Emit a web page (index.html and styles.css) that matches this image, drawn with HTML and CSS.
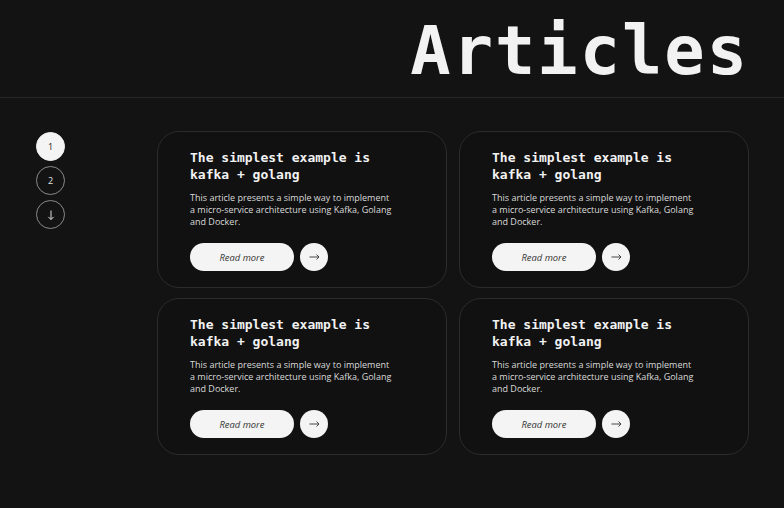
FILE: index.html
```html
<!DOCTYPE html>
<html lang="en">
<head>
<meta charset="utf-8">
<title>Articles</title>
<link rel="stylesheet" href="styles.css">
</head>
<body>
<header class="top">
  <h1 class="title">Articles</h1>
</header>
<main class="main">
  <nav class="pager">
    <span class="dot active">1</span>
    <span class="dot">2</span>
    <span class="dot"><svg width="10" height="12" viewBox="0 0 10 12"><path d="M5 1.5v9M2.4 7.9L5 10.5l2.6-2.6" fill="none" stroke="#e0e0e0" stroke-width="1"/></svg></span>
  </nav>
  <section class="grid">
    <article class="card">
      <h2 class="card-title">The simplest example is kafka + golang</h2>
      <p class="card-text">This article presents a simple way to implement a micro-service architecture using Kafka, Golang and Docker.</p>
      <div class="actions">
        <a class="btn" href="#">Read more</a>
        <a class="arrow" href="#"><svg width="11" height="8" viewBox="0 0 11 8"><path d="M0.5 4h9.5M7.5 1.5L10 4 7.5 6.5" fill="none" stroke="#333" stroke-width="0.9"/></svg></a>
      </div>
    </article>
    <article class="card">
      <h2 class="card-title">The simplest example is kafka + golang</h2>
      <p class="card-text">This article presents a simple way to implement a micro-service architecture using Kafka, Golang and Docker.</p>
      <div class="actions">
        <a class="btn" href="#">Read more</a>
        <a class="arrow" href="#"><svg width="11" height="8" viewBox="0 0 11 8"><path d="M0.5 4h9.5M7.5 1.5L10 4 7.5 6.5" fill="none" stroke="#333" stroke-width="0.9"/></svg></a>
      </div>
    </article>
    <article class="card">
      <h2 class="card-title">The simplest example is kafka + golang</h2>
      <p class="card-text">This article presents a simple way to implement a micro-service architecture using Kafka, Golang and Docker.</p>
      <div class="actions">
        <a class="btn" href="#">Read more</a>
        <a class="arrow" href="#"><svg width="11" height="8" viewBox="0 0 11 8"><path d="M0.5 4h9.5M7.5 1.5L10 4 7.5 6.5" fill="none" stroke="#333" stroke-width="0.9"/></svg></a>
      </div>
    </article>
    <article class="card">
      <h2 class="card-title">The simplest example is kafka + golang</h2>
      <p class="card-text">This article presents a simple way to implement a micro-service architecture using Kafka, Golang and Docker.</p>
      <div class="actions">
        <a class="btn" href="#">Read more</a>
        <a class="arrow" href="#"><svg width="11" height="8" viewBox="0 0 11 8"><path d="M0.5 4h9.5M7.5 1.5L10 4 7.5 6.5" fill="none" stroke="#333" stroke-width="0.9"/></svg></a>
      </div>
    </article>
  </section>
</main>
</body>
</html>
```
FILE: styles.css
```css
* { box-sizing: border-box; }
html, body { margin: 0; padding: 0; }
body {
  background: #131313;
  color: #f2f2f2;
  font-family: "Open Sans", sans-serif;
  width: 784px;
  height: 508px;
  overflow: hidden;
}
.top {
  height: 98px;
  border-bottom: 1px solid #262626;
  display: flex;
  justify-content: flex-end;
  align-items: flex-end;
  padding-right: 35px;
}
.title {
  margin: 0 0 6px;
  font-family: "DejaVu Sans Mono", monospace;
  font-weight: bold;
  font-size: 67px;
  line-height: 80px;
  color: #f2f2f2;
  letter-spacing: 2px;
}
.main {
  display: flex;
  padding: 33px 0 0 36px;
}
.pager {
  display: flex;
  flex-direction: column;
  gap: 5px;
  width: 29px;
  margin-top: 1px;
  margin-right: 92px;
}
.dot {
  width: 29px;
  height: 29px;
  border-radius: 50%;
  border: 1px solid #8a8a8a;
  display: flex;
  align-items: center;
  justify-content: center;
  font-size: 9px;
  color: #e6e6e6;
}
.dot.active {
  background: #f4f4f4;
  border-color: #f4f4f4;
  color: #222;
}
.grid {
  display: grid;
  grid-template-columns: 290px 290px;
  column-gap: 12px;
  row-gap: 10px;
}
.card {
  height: 157px;
  border: 1px solid #2c2c2c;
  border-radius: 22px;
  background: #111;
  padding: 17px 32px 16px;
  display: flex;
  flex-direction: column;
}
.card-title {
  margin: 0;
  font-family: "DejaVu Sans Mono", monospace;
  font-weight: bold;
  font-size: 13px;
  line-height: 17px;
  color: #f2f2f2;
  width: 190px;
}
.card-text {
  margin: 9px 0 0;
  font-size: 9px;
  line-height: 11.8px;
  color: #dadada;
  width: 205px;
}
.actions {
  margin-top: auto;
  display: flex;
  gap: 6px;
}
.btn {
  width: 104px;
  height: 28px;
  border-radius: 14px;
  background: #f4f4f4;
  color: #333;
  font-style: italic;
  font-size: 9.4px;
  text-decoration: none;
  display: flex;
  align-items: center;
  justify-content: center;
}
.arrow {
  width: 28px;
  height: 28px;
  border-radius: 50%;
  background: #f4f4f4;
  display: flex;
  align-items: center;
  justify-content: center;
}
```
